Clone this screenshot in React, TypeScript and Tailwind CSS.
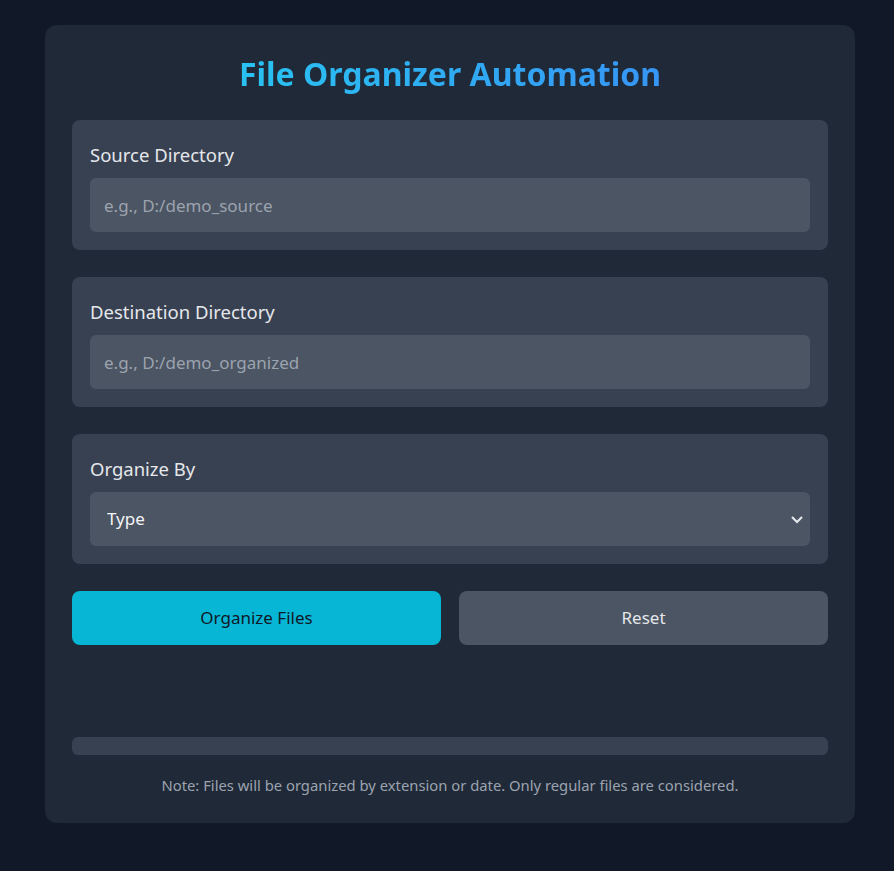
const fontStack = { fontFamily: '"Noto Sans", "Open Sans", sans-serif' };

const Field = ({ label, placeholder }: { label: string; placeholder: string }) => (
  <div className="bg-[#374151] rounded-lg p-[18px]">
    <label className="block text-[18.5px] leading-[34px] text-[#e5e7eb] mb-[6px]">{label}</label>
    <input
      type="text"
      placeholder={placeholder}
      className="w-full h-[54px] rounded-md bg-[#4b5563] px-[14px] text-[17px] text-gray-100 placeholder:text-[#9ca3af] outline-none"
    />
  </div>
);

export default function App() {
  return (
    <div className="min-h-screen bg-[#111827] pt-[25px] pb-12" style={fontStack}>
      <div className="ml-[45px] w-[810px] bg-[#1f2937] rounded-xl px-[27px] pt-[27px] pb-[28px]">
        <h1 className="text-center text-[32px] leading-[44px] font-bold bg-gradient-to-r from-[#22d3ee] to-[#3b82f6] bg-clip-text text-transparent mb-[24px]">
          File Organizer Automation
        </h1>

        <div className="flex flex-col gap-[27px]">
          <Field label="Source Directory" placeholder="e.g., D:/demo_source" />
          <Field label="Destination Directory" placeholder="e.g., D:/demo_organized" />

          <div className="bg-[#374151] rounded-lg p-[18px]">
            <label className="block text-[18.5px] leading-[34px] text-[#e5e7eb] mb-[6px]">Organize By</label>
            <div className="relative">
              <select className="w-full h-[54px] appearance-none rounded-md bg-[#4b5563] px-[17px] text-[17px] text-gray-100 outline-none">
                <option>Type</option>
                <option>Date</option>
              </select>
              <svg
                className="absolute right-[5px] top-1/2 -translate-y-1/2 pointer-events-none"
                width="16"
                height="16"
                viewBox="0 0 16 16"
                fill="none"
                stroke="#e5e7eb"
                strokeWidth="2.2"
              >
                <path d="M3 6l5 5 5-5" />
              </svg>
            </div>
          </div>

          <div className="grid grid-cols-2 gap-[18px]">
            <button className="h-[54px] rounded-lg bg-[#06b6d4] text-[17px] text-[#111827]">Organize Files</button>
            <button className="h-[54px] rounded-lg bg-[#4b5563] text-[17px] text-[#e5e7eb]">Reset</button>
          </div>
        </div>

        <div className="h-[92px]" />

        <div className="h-[18px] rounded-md bg-[#374151]" />

        <p className="mt-[20px] text-center text-[14.8px] leading-[20px] text-[#9ca3af]">
          Note: Files will be organized by extension or date. Only regular files are considered.
        </p>
      </div>
    </div>
  );
}
